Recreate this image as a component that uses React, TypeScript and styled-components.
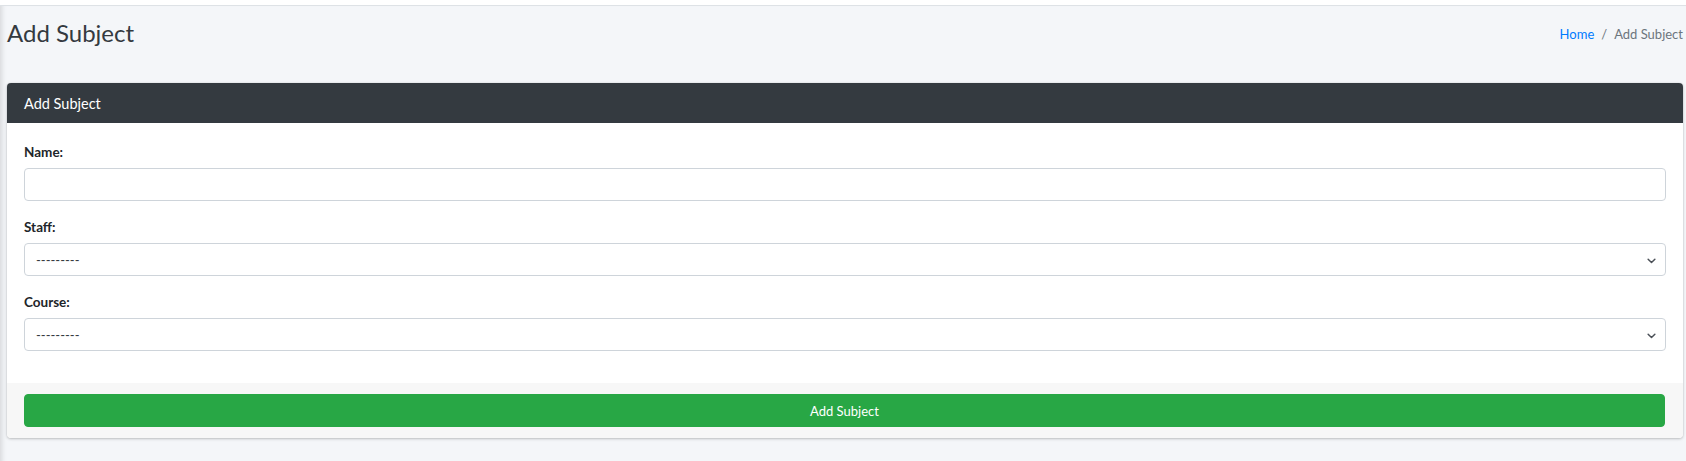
import React from 'react';
import styled, { createGlobalStyle } from 'styled-components';

const GlobalStyle = createGlobalStyle`
  html, body {
    margin: 0;
    padding: 0;
    background: #f4f6f9;
    font-family: Lato, "Liberation Sans", sans-serif;
    color: #212529;
  }
  * { box-sizing: border-box; }
`;

const TopBar = styled.div`
  height: 6px;
  background: #fff;
  border-bottom: 1px solid #dee2e6;
`;

const Wrapper = styled.div`
  min-height: 455px;
  padding: 0 3px 24px 7px;
  background: #f4f6f9;
  box-shadow: inset 6px 0 5px -4px rgba(0, 0, 0, 0.12);
`;

const ContentHeader = styled.div`
  display: flex;
  justify-content: space-between;
  align-items: flex-start;
  padding-top: 13px;
  height: 77px;
`;

const PageTitle = styled.h1`
  margin: 0;
  font-size: 24px;
  line-height: 1.2;
  font-weight: 400;
  color: #343a40;
`;

const Breadcrumb = styled.nav`
  display: flex;
  align-items: center;
  gap: 7px;
  margin-top: 6px;
  font-size: 13px;
  line-height: 1.5;
  color: #6c757d;
`;

const Crumb = styled.a`
  color: #007bff;
  text-decoration: none;
`;

const Card = styled.div`
  background: #fff;
  border-radius: 4px;
  box-shadow: 0 0 1px rgba(0, 0, 0, 0.2), 0 1px 3px rgba(0, 0, 0, 0.22);
  overflow: hidden;
`;

const CardHeader = styled.div`
  height: 40px;
  display: flex;
  align-items: center;
  padding: 0 17px;
  background: #343a40;
  color: #fff;
  font-size: 14.5px;
`;

const CardBody = styled.div`
  padding: 19px 17px 16px;
`;

const FormGroup = styled.div`
  margin-bottom: 16px;
`;

const Label = styled.label`
  display: block;
  height: 21px;
  line-height: 21px;
  margin-bottom: 5px;
  font-size: 13.5px;
  font-weight: 700;
  color: #212529;
`;

const Input = styled.input`
  display: block;
  width: 100%;
  height: 33px;
  padding: 0 11px;
  border: 1px solid #ced4da;
  border-radius: 4px;
  background: #fff;
  font-family: inherit;
  font-size: 13px;
  color: #495057;
  outline: none;
`;

const SelectWrap = styled.div`
  position: relative;
`;

const Select = styled.select`
  display: block;
  width: 100%;
  height: 33px;
  padding: 0 30px 0 11px;
  border: 1px solid #ced4da;
  border-radius: 4px;
  background: #fff;
  appearance: none;
  font-family: inherit;
  font-size: 13px;
  color: #343a40;
  outline: none;
`;

const Chevron = styled.svg`
  position: absolute;
  right: 10px;
  top: 50%;
  width: 9px;
  height: 9px;
  transform: translateY(-40%);
  pointer-events: none;
`;

const CardFooter = styled.div`
  padding: 11px 18px 11px 17px;
  background: #f7f7f7;
`;

const SubmitButton = styled.button`
  display: block;
  width: 100%;
  height: 33px;
  border: 1px solid #28a745;
  border-radius: 4px;
  background: #28a745;
  color: #fff;
  font-family: inherit;
  font-size: 13px;
  cursor: pointer;
`;

const SelectField: React.FC<{ id: string; label: string }> = ({ id, label }) => (
  <FormGroup>
    <Label htmlFor={id}>{label}</Label>
    <SelectWrap>
      <Select id={id} defaultValue="">
        <option value="">---------</option>
      </Select>
      <Chevron viewBox="0 0 16 16" fill="none">
        <path d="M2 5l6 6 6-6" stroke="#4b5057" strokeWidth="2.6" strokeLinecap="round" strokeLinejoin="round" />
      </Chevron>
    </SelectWrap>
  </FormGroup>
);

export default function App() {
  return (
    <>
      <GlobalStyle />
      <TopBar />
      <Wrapper>
        <ContentHeader>
          <PageTitle>Add Subject</PageTitle>
          <Breadcrumb>
            <Crumb href="#">Home</Crumb>
            <span>/</span>
            <span>Add Subject</span>
          </Breadcrumb>
        </ContentHeader>
        <Card>
          <CardHeader>Add Subject</CardHeader>
          <CardBody>
            <FormGroup>
              <Label htmlFor="name">Name:</Label>
              <Input id="name" type="text" />
            </FormGroup>
            <SelectField id="staff" label="Staff:" />
            <SelectField id="course" label="Course:" />
          </CardBody>
          <CardFooter>
            <SubmitButton type="button">Add Subject</SubmitButton>
          </CardFooter>
        </Card>
      </Wrapper>
    </>
  );
}
